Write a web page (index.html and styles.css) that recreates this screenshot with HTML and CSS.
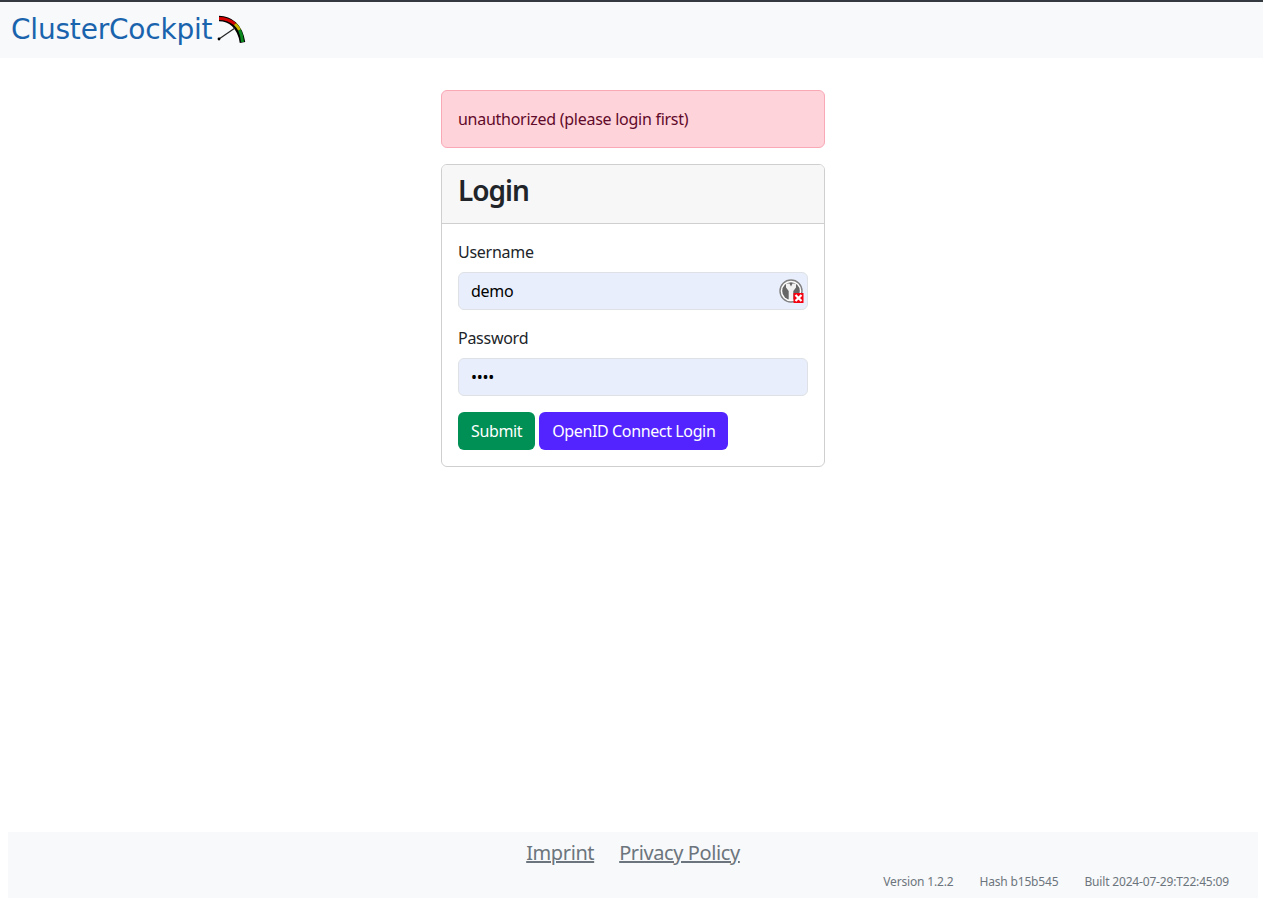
FILE: index.html
```html
<!DOCTYPE html>
<html lang="en">
<head>
<meta charset="utf-8">
<title>Login - ClusterCockpit</title>
<link rel="stylesheet" href="styles.css">
</head>
<body>
<header class="navbar">
  <a class="brand" href="#">
    <span class="brand-name">ClusterCockpit</span>
    <svg class="brand-gauge" width="30" height="30" viewBox="0 0 30 30" aria-hidden="true">
      <path d="M3 4.500C14 4.500 24 12 26.500 28.500" fill="none" stroke="#000" stroke-width="5.500"/>
      <path d="M3 4.500C9 4.500 14.500 6.500 19 10" fill="none" stroke="#d40000" stroke-width="3"/>
      <path d="M19 10C21 12 22.500 14 23.600 16" fill="none" stroke="#c8b400" stroke-width="3"/>
      <path d="M23.600 16C25 19 26.200 23 26.500 28" fill="none" stroke="#0a8a1e" stroke-width="3"/>
      <path d="M3 25L19 14" fill="none" stroke="#222" stroke-width="1.200"/>
      <circle cx="3" cy="25" r="1.400" fill="#000"/>
    </svg>
  </a>
</header>
<main class="container">
  <div class="alert">unauthorized (please login first)</div>
  <section class="card">
    <div class="card-header"><h3 class="card-title">Login</h3></div>
    <form class="card-body">
      <div class="field">
        <label class="field-label" for="username">Username</label>
        <div class="input-wrap">
          <input class="field-input" id="username" type="text" value="demo">
          <svg class="key-icon" width="26" height="26" viewBox="0 0 26 26" aria-hidden="true">
            <circle cx="12" cy="13" r="11" fill="#fff" stroke="#808080" stroke-width="1.400"/>
            <circle cx="12" cy="13" r="8.800" fill="#666"/>
            <path d="M7 5.500h3.500l1.500 3 1.500-3H17v4l-2.700 3.500V22h-4.600V13L7 9.500z" fill="#f2f2f2"/>
            <rect x="14.500" y="15" width="10" height="10" fill="#f5000f"/>
            <path d="M16.500 17l6 6m0-6l-6 6" stroke="#fff" stroke-width="2.200"/>
          </svg>
        </div>
      </div>
      <div class="field">
        <label class="field-label" for="password">Password</label>
        <input class="field-input" id="password" type="password" value="demo">
      </div>
      <div class="actions">
        <button class="btn btn-success" type="button">Submit</button>
        <a class="btn btn-primary" href="#">OpenID Connect Login</a>
      </div>
    </form>
  </section>
</main>
<footer class="footer">
  <nav class="footer-links">
    <a class="footer-link" href="#">Imprint</a>
    <a class="footer-link" href="#">Privacy Policy</a>
  </nav>
  <div class="build-info">
    <span>Version 1.2.2</span>
    <span>Hash b15b545</span>
    <span>Built 2024-07-29:T22:45:09</span>
  </div>
</footer>
</body>
</html>
```
FILE: styles.css
```css
* { box-sizing: border-box; }
html, body { height: 100%; }
body {
  margin: 0;
  display: flex;
  flex-direction: column;
  background: #fff;
  color: #212529;
  font-family: "Noto Sans", "Liberation Sans", sans-serif;
  font-size: 16px;
  line-height: 24px;
  letter-spacing: -0.27px;
  overflow: hidden;
}
.navbar {
  height: 58px;
  flex: none;
  border-top: 2px solid #343a40;
  background: #f8f9fa;
  padding: 0 11px;
  display: flex;
  align-items: center;
}
.brand {
  display: flex;
  align-items: center;
  gap: 4px;
  text-decoration: none;
}
.brand-name {
  color: #1a64ae;
  font-family: "DejaVu Sans", sans-serif;
  font-size: 28px;
  line-height: 32px;
  letter-spacing: -0.2px;
}
.brand-gauge { display: block; margin-top: -2px; }
.container {
  flex: 1;
  width: 384px;
  margin: 0 438px 0 441px;
  padding-top: 32px;
}
.alert {
  height: 58px;
  margin-bottom: 16px;
  padding: 16px;
  border: 1px solid #f9a8b6;
  border-radius: 6px;
  background: #ffd3da;
  color: #5f0a2a;
}
.card {
  border: 1px solid #cfcfcf;
  border-radius: 6px;
}
.card-header {
  height: 59px;
  padding: 8px 16px;
  background: #f7f7f7;
  border-bottom: 1px solid #cfcfcf;
  border-radius: 5px 5px 0 0;
}
.card-title {
  margin: 0;
  font-size: 28px;
  line-height: 34px;
  font-weight: 600;
  letter-spacing: -1px;
}
.card-body { padding: 16px; }
.field { margin-bottom: 16px; }
.field-label {
  display: block;
  margin-bottom: 8px;
}
.input-wrap { position: relative; }
.field-input {
  display: block;
  width: 100%;
  height: 38px;
  padding: 6px 12px;
  border: 1px solid #dee2e6;
  border-radius: 6px;
  background: #e8eefc;
  color: #000;
  font: inherit;
  letter-spacing: inherit;
  outline: none;
}
.key-icon {
  position: absolute;
  right: 3px;
  top: 6px;
}
.actions {
  display: flex;
  gap: 4px;
}
.btn {
  display: block;
  height: 38px;
  padding: 6px 12px;
  border: 1px solid transparent;
  border-radius: 6px;
  color: #fff;
  font: inherit;
  letter-spacing: -0.37px;
  text-decoration: none;
}
.btn-success { background: #008f54; }
.btn-primary { background: #5324ff; }
.footer {
  flex: none;
  height: 66px;
  margin: 0 5px 8px 8px;
  background: #f8f9fa;
  display: flex;
  flex-direction: column;
}
.footer-links {
  display: flex;
  justify-content: center;
  gap: 25px;
  margin-top: 8px;
  font-size: 20px;
  line-height: 26px;
  letter-spacing: -0.4px;
}
.footer-link { color: #6c757d; }
.build-info {
  display: flex;
  justify-content: flex-end;
  gap: 26px;
  margin-top: 7px;
  padding-right: 29px;
  color: #6c757d;
  font-size: 12px;
  line-height: 18px;
  letter-spacing: -0.17px;
}
```
